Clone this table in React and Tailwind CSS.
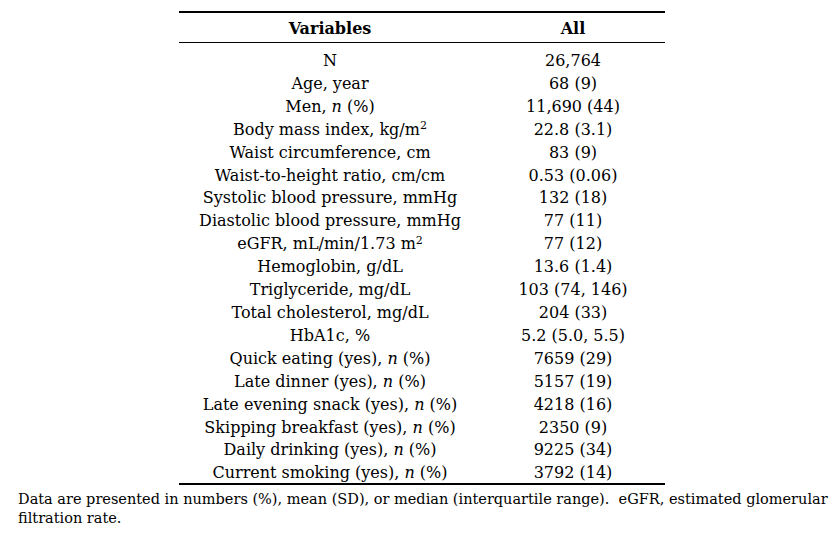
import React from 'react';

const rows = [
  [<>N</>, '26,764'],
  [<>Age, year</>, '68 (9)'],
  [<>Men, <i>n</i> (%)</>, '11,690 (44)'],
  [<>Body mass index, kg/m<sup className="text-[11px]">2</sup></>, '22.8 (3.1)'],
  [<>Waist circumference, cm</>, '83 (9)'],
  [<>Waist-to-height ratio, cm/cm</>, '0.53 (0.06)'],
  [<>Systolic blood pressure, mmHg</>, '132 (18)'],
  [<>Diastolic blood pressure, mmHg</>, '77 (11)'],
  [<>eGFR, mL/min/1.73 m<sup className="text-[11px]">2</sup></>, '77 (12)'],
  [<>Hemoglobin, g/dL</>, '13.6 (1.4)'],
  [<>Triglyceride, mg/dL</>, '103 (74, 146)'],
  [<>Total cholesterol, mg/dL</>, '204 (33)'],
  [<>HbA1c, %</>, '5.2 (5.0, 5.5)'],
  [<>Quick eating (yes), <i>n</i> (%)</>, '7659 (29)'],
  [<>Late dinner (yes), <i>n</i> (%)</>, '5157 (19)'],
  [<>Late evening snack (yes), <i>n</i> (%)</>, '4218 (16)'],
  [<>Skipping breakfast (yes), <i>n</i> (%)</>, '2350 (9)'],
  [<>Daily drinking (yes), <i>n</i> (%)</>, '9225 (34)'],
  [<>Current smoking (yes), <i>n</i> (%)</>, '3792 (14)'],
];

const App = () => {
  return (
    <div className="w-[840px] h-[534px] bg-white text-black overflow-hidden font-['DejaVu_Serif',serif]">
      {/* table */}
      <div className="ml-[179px] mt-[11px] w-[486px] border-t-2 border-b-2 border-black">
        <div className="grid grid-cols-[302px_184px] h-[30px] items-center border-b border-black font-bold text-[16px] leading-[30px] pt-[1px]">
          <div className="text-center">Variables</div>
          <div className="text-center">All</div>
        </div>
        <div className="h-[440px] pt-[7px]">
          {rows.map(([label, value], i) => (
            <div key={i} className="grid grid-cols-[302px_184px] text-[16px] leading-[22.9px]">
              <div className="text-center whitespace-nowrap">{label}</div>
              <div className="text-center">{value}</div>
            </div>
          ))}
        </div>
      </div>

      {/* footnote */}
      <div className="ml-[18px] mt-[5px] w-[815px] text-[14.5px] leading-[19px]">
        <div className="whitespace-nowrap">
          Data are presented in numbers (%), mean (SD), or median (interquartile range).&nbsp; eGFR, estimated glomerular
        </div>
        <div>filtration rate.</div>
      </div>
    </div>
  );
};

export default App;
